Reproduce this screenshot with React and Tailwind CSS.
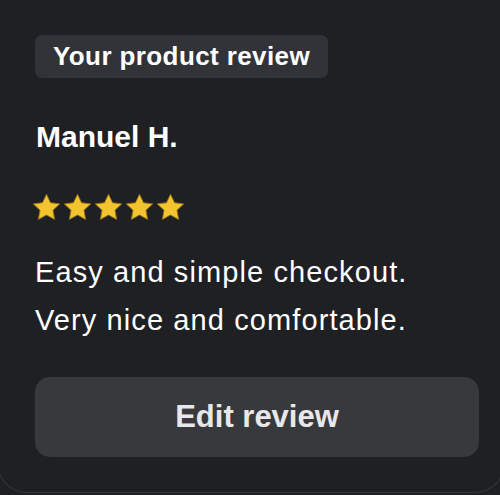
import React from "react";

const STAR = "M12 1.8l3.1 6.5 7.1.9-5.2 4.9 1.3 7.1L12 17.8l-6.3 3.4 1.3-7.1-5.2-4.9 7.1-.9z";

function Star() {
  return (
    <svg width="31" height="31" viewBox="0 0 24 24">
      <path d={STAR} fill="#f3c42f" stroke="#9a7415" strokeWidth="0.7" strokeLinejoin="round" />
    </svg>
  );
}

export default function App() {
  return (
    <div className="w-[500px] h-[495px] overflow-hidden bg-[#1f2024] font-['Liberation_Sans',Arial,sans-serif]">
      <div className="-ml-[3px] w-[508px] h-[493px] border-x border-b border-[#34353a] rounded-b-[30px] pl-[37px] pr-[25px] pt-[35px]">
        <div className="inline-flex h-[43px] items-center px-[18px] rounded-[7px] bg-[#323338] text-white font-bold text-[26px] tracking-[0.4px]">
          Your product review
        </div>

        <h2 className="mt-[42px] ml-[1px] text-white font-bold text-[30px] leading-[34px]">Manuel H.</h2>

        <div className="mt-[38px] flex -ml-[4px]">
          {[0, 1, 2, 3, 4].map((i) => (
            <Star key={i} />
          ))}
        </div>

        <p className="mt-[25px] text-white text-[29px] leading-[48px] tracking-[1.1px]">
          Easy and simple checkout.
          <br />
          Very nice and comfortable.
        </p>

        <button className="mt-[33px] w-[444px] h-[80px] rounded-[15px] bg-[#38393d] text-[#e8e8ea] font-bold text-[31px]">
          Edit review
        </button>
      </div>
    </div>
  );
}
